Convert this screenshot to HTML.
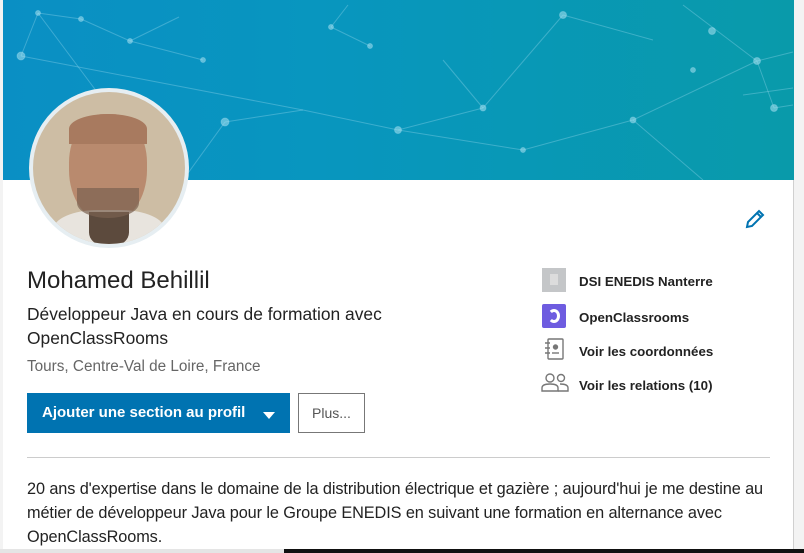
<!DOCTYPE html>
<html><head><meta charset="utf-8"><style>
*{margin:0;padding:0;box-sizing:border-box}
body{width:804px;height:553px;overflow:hidden;background:#f3f3f3;font-family:"Liberation Sans",sans-serif;position:relative}
.card{position:absolute;left:3px;top:0;width:791px;height:549px;background:#fff;border-right:1px solid #d0d0d0}
.banner{position:absolute;left:0;top:0;width:791px;height:180px;background:linear-gradient(90deg,#0a8fc4 0%,#0896bf 40%,#099aaa 100%)}
.t{position:absolute;white-space:nowrap;color:#000}
.av{position:absolute;left:26px;top:88px;width:160px;height:160px;border-radius:50%;background:#e6eef2;padding:4px}
.av div{width:152px;height:152px;border-radius:50%;overflow:hidden;position:relative;background:#cdbda4}
.btn{position:absolute;left:24px;top:393px;width:263px;height:40px;background:#0073b1;color:#fff;font-size:15px;font-weight:bold;line-height:40px;padding-left:15px}
.plus{position:absolute;left:295px;top:393px;width:67px;height:40px;border:1px solid #777;color:#555;font-size:14px;line-height:38px;text-align:center}
.hr{position:absolute;left:24px;top:457px;width:743px;height:1px;background:#ccc}
.r{font-size:13.3px;font-weight:bold;color:#222}
</style></head><body>
<div class="card">
<div class="banner">
<svg width="791" height="180" style="position:absolute;left:0;top:0" stroke="rgba(160,220,240,0.35)" stroke-width="1" fill="rgba(170,225,240,0.55)">
<line x1="35" y1="13" x2="78" y2="19"/><line x1="35" y1="13" x2="18" y2="56"/><line x1="35" y1="13" x2="100" y2="100"/><line x1="78" y1="19" x2="127" y2="41"/><line x1="127" y1="41" x2="176" y2="17"/><line x1="127" y1="41" x2="200" y2="60"/><line x1="18" y1="56" x2="300" y2="110"/><line x1="300" y1="110" x2="395" y2="130"/><line x1="395" y1="130" x2="480" y2="108"/><line x1="480" y1="108" x2="560" y2="15"/><line x1="560" y1="15" x2="650" y2="40"/><line x1="395" y1="130" x2="520" y2="150"/><line x1="520" y1="150" x2="630" y2="120"/><line x1="630" y1="120" x2="754" y2="61"/><line x1="754" y1="61" x2="790" y2="52"/><line x1="754" y1="61" x2="771" y2="108"/><line x1="771" y1="108" x2="790" y2="105"/><line x1="630" y1="120" x2="700" y2="180"/><line x1="680" y1="5" x2="754" y2="61"/><line x1="328" y1="27" x2="367" y2="46"/><line x1="328" y1="27" x2="345" y2="5"/><line x1="480" y1="108" x2="440" y2="60"/><line x1="222" y1="122" x2="180" y2="180"/><line x1="222" y1="122" x2="300" y2="110"/><line x1="740" y1="95" x2="790" y2="88"/>
<circle cx="35" cy="13" r="2.5"/><circle cx="78" cy="19" r="2.5"/><circle cx="127" cy="41" r="2.5"/><circle cx="18" cy="56" r="4"/><circle cx="200" cy="60" r="2.5"/><circle cx="328" cy="27" r="2.5"/><circle cx="367" cy="46" r="2.5"/><circle cx="395" cy="130" r="3.5"/><circle cx="480" cy="108" r="3"/><circle cx="520" cy="150" r="2.5"/><circle cx="560" cy="15" r="3.5"/><circle cx="630" cy="120" r="3"/><circle cx="709" cy="31" r="3.5"/><circle cx="754" cy="61" r="3.5"/><circle cx="771" cy="108" r="3.5"/><circle cx="222" cy="122" r="4"/><circle cx="690" cy="70" r="2.5"/>
</svg>
</div>
<div class="av"><div>
<div style="position:absolute;left:36px;top:22px;width:78px;height:108px;border-radius:45% 45% 48% 48%;background:#b98a6e"></div>
<div style="position:absolute;left:36px;top:22px;width:78px;height:30px;border-radius:50% 50% 0 0;background:#a87a5f"></div>
<div style="position:absolute;left:20px;top:118px;width:112px;height:50px;border-radius:40% 40% 0 0;background:#e8e4de"></div>
<div style="position:absolute;left:56px;top:120px;width:40px;height:34px;background:#5c4a3d;border-radius:0 0 40% 40%"></div>
<div style="position:absolute;left:44px;top:96px;width:62px;height:30px;border-radius:0 0 50% 50%;background:#7b6150;opacity:.7"></div>
</div></div>
<svg style="position:absolute;left:741px;top:208px" width="22" height="22" viewBox="0 0 22 22" fill="none" stroke="#0073b1" stroke-width="2"><path d="M3 19l1-5L15 3l4 4L8 18z M13 5l4 4"/></svg>
<div class="t" style="left:24px;top:267px;font-size:24px;color:#222">Mohamed Behillil</div>
<div class="t" style="left:24px;top:302px;font-size:17.4px;color:#222;line-height:24px">Développeur Java en cours de formation avec<br>OpenClassRooms</div>
<div class="t" style="left:24px;top:358px;font-size:15.3px;color:#666">Tours, Centre-Val de Loire, France</div>
<div class="btn">Ajouter une section au profil<span style="position:absolute;left:236px;top:19px;border:6px solid transparent;border-top:7px solid #fff"></span></div>
<div class="plus">Plus...</div>
<div style="position:absolute;left:539px;top:268px;width:24px;height:24px;background:#c4c6c8"></div>
<div style="position:absolute;left:547px;top:274px;width:8px;height:11px;background:#dcdcdc"></div>
<div style="position:absolute;left:539px;top:304px;width:24px;height:24px;background:#6e5ce0;border-radius:2px"></div>
<div style="position:absolute;left:545px;top:309px;width:12px;height:14px;border:3px solid #fff;border-left-color:transparent;border-radius:50%"></div>
<svg style="position:absolute;left:540px;top:338px" width="24" height="22" viewBox="0 0 24 22" fill="none" stroke="#777" stroke-width="1.4"><rect x="5" y="1" width="15" height="20" rx="1"/><path d="M2 5h5M2 10h5M2 15h5"/><circle cx="12.5" cy="9" r="2" fill="#777"/><path d="M9 15h7"/></svg>
<svg style="position:absolute;left:538px;top:372px" width="28" height="20" viewBox="0 0 28 20" fill="none" stroke="#777" stroke-width="1.4"><circle cx="9" cy="6" r="4"/><path d="M1 19v-3c0-3 4-4 8-4s8 1 8 4v3z"/><circle cx="20" cy="6" r="3.5"/><path d="M19 12c4 0 8 1 8 4v3h-10"/></svg>
<div class="t r" style="left:576px;top:274px">DSI ENEDIS Nanterre</div>
<div class="t r" style="left:576px;top:310px">OpenClassrooms</div>
<div class="t r" style="left:576px;top:344px">Voir les coordonnées</div>
<div class="t r" style="left:576px;top:378px">Voir les relations (10)</div>
<div class="hr"></div>
<div class="t" style="left:24px;top:477px;font-size:16.3px;line-height:24px;color:#222;letter-spacing:-0.1px">20 ans d'expertise dans le domaine de la distribution électrique et gazière ; aujourd'hui je me destine au<br>métier de développeur Java pour le Groupe ENEDIS en suivant une formation en alternance avec<br>OpenClassRooms.</div>
</div>
<div style="position:absolute;left:0;top:549px;width:804px;height:4px;background:#e5e5e5"></div>
<div style="position:absolute;left:284px;top:549px;width:520px;height:4px;background:#111"></div>
</body></html>
